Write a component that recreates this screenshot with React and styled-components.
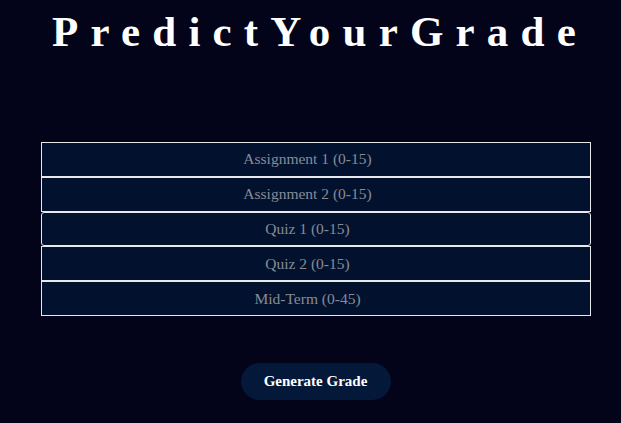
import React from 'react'
import styled, { createGlobalStyle } from 'styled-components'

const GlobalStyle = createGlobalStyle`
  html, body {
    margin: 0;
    padding: 0;
    background: #03041a;
  }
  body {
    font-family: "Liberation Serif", "Times New Roman", serif;
    min-height: 423px;
  }
`;

const Page = styled.div`
  display: flex;
  flex-direction: column;
  align-items: center;
  padding-left: 10px;
  min-height: 423px;
  box-sizing: border-box;
`;

const Title = styled.h1`
  margin: 0;
  padding: 7px 0 0 9px;
  font-size: 43px;
  font-weight: bold;
  letter-spacing: 12.2px;
  color: #ffffff;
  line-height: normal;
`;

const Form = styled.div`
  display: flex;
  flex-direction: column;
  width: 550px;
  margin-top: 86px;
`;

const Field = styled.input`
  box-sizing: border-box;
  width: 100%;
  height: 34.8px;
  margin: 0;
  padding: 0 16px 0 0;
  border: 1px solid #e8e8ec;
  border-radius: ${(props) => (props.rounded ? '3px' : '0')};
  background: #02122e;
  color: #ffffff;
  font-family: "Liberation Serif", "Times New Roman", serif;
  font-size: 15.5px;
  text-align: center;
  outline: none;

  &::placeholder {
    font-family: "Liberation Serif", "Times New Roman", serif;
    color: #878b96;
  }
`;

const Button = styled.button`
  margin-top: 47px;
  width: 150px;
  height: 37px;
  border: none;
  border-radius: 19px;
  background: #04183a;
  color: #ffffff;
  font-family: "Liberation Serif", "Times New Roman", serif;
  font-size: 15px;
  font-weight: bold;
  cursor: pointer;
`;

const fields = [
  'Assignment 1 (0-15)',
  'Assignment 2 (0-15)',
  'Quiz 1 (0-15)',
  'Quiz 2 (0-15)',
  'Mid-Term (0-45)',
];

const App = () => {
  return (
    <Page>
      <GlobalStyle />
      <Title>PredictYourGrade</Title>
      <Form>
        {fields.map((f, i) => (
          <Field key={f} placeholder={f} rounded={i === 2 ? 1 : 0} />
        ))}
      </Form>
      <Button>Generate Grade</Button>
    </Page>
  )
}

export default App
